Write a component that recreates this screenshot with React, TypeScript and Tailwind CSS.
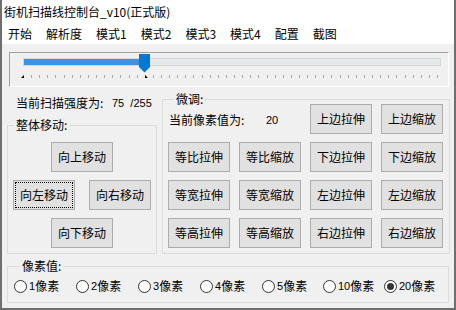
import type { ReactNode } from 'react';

const menus = ['开始', '解析度', '模式1', '模式2', '模式3', '模式4', '配置', '截图'];

const fineRows = [
  ['等比拉伸', '等比缩放', '下边拉伸', '下边缩放'],
  ['等宽拉伸', '等宽缩放', '左边拉伸', '左边缩放'],
  ['等高拉伸', '等高缩放', '右边拉伸', '右边缩放'],
];

const radios = [
  { n: '1', w: 'w-[62px]' },
  { n: '2', w: 'w-[62px]' },
  { n: '3', w: 'w-[62px]' },
  { n: '4', w: 'w-[62px]' },
  { n: '5', w: 'w-[61px]' },
  { n: '10', w: 'w-[61px]' },
  { n: '20', w: 'w-[61px]', checked: true },
];

function Btn({ label, focus }: { label: string; focus?: boolean }) {
  return (
    <button className="relative w-[62px] h-[30px] bg-[#e1e1e1] border border-[#adadad] text-[12px] leading-none text-black flex items-center justify-center">
      {focus && <span className="absolute inset-[1px] border border-dotted border-black" />}
      {label}
    </button>
  );
}

function Group({ label, className, children }: { label: string; className: string; children: ReactNode }) {
  return (
    <fieldset className={`border border-[#dcdcdc] ${className}`}>
      <legend className="ml-[6px] px-[2px] text-[12px] leading-[12px]">{label}</legend>
      {children}
    </fieldset>
  );
}

function Radio({ n, w, checked }: { n: string; w: string; checked?: boolean }) {
  return (
    <div className={`flex items-center h-[14px] ${w}`}>
      <span className="w-[13px] h-[13px] rounded-full border border-[#333333] bg-white flex items-center justify-center shrink-0">
        {checked && <span className="w-[7px] h-[7px] rounded-full bg-[#333333]" />}
      </span>
      <span className="ml-[2px] font-['Liberation_Sans',sans-serif] text-[11px]">{n}</span>
      <span>像素</span>
    </div>
  );
}

function Slider() {
  const ticks = Array.from({ length: 52 }, (_, i) => 13 + (i * 414) / 51);
  return (
    <div className="relative mt-[8px] ml-[7px] w-[440px] h-[35px] border border-t-[#a0a0a0] border-l-[#a0a0a0] border-r-white border-b-white">
      {/* track */}
      <div className="mt-[5px] ml-[13px] w-[418px] h-[8px] bg-[#e7eaea] border border-[#d6d6d6] p-0">
        <div className="w-[116px] h-full bg-[#3a93e6]" />
      </div>
      {/* thumb */}
      <svg className="absolute left-[129px] top-[1px]" width="11" height="19" viewBox="0 0 11 19">
        <polygon points="0,0 11,0 11,13 5.5,18.5 0,13" fill="#0078d7" />
      </svg>
      {/* ticks */}
      <svg className="absolute left-0 top-[21px]" width="438" height="5" viewBox="0 0 438 5">
        {ticks.map((x, i) =>
          i === 0 ? null : <rect key={i} x={Math.round(x)} y={1} width={1} height={3} fill="#a8a8a8" />
        )}
        <polygon points="11,4 14,4 14,1" fill="#000" />
        <polygon points="135,1 135,4 138,4" fill="#000" />
      </svg>
    </div>
  );
}

export default function App() {
  return (
    <div className="w-[456px] h-[310px] flex flex-col bg-white border-x-2 border-b-2 border-[#6f6f6f] font-['Noto_Sans_CJK_SC',sans-serif] text-[12px] text-black overflow-hidden">
      {/* title */}
      <div className="h-[24px] shrink-0 flex items-center pl-[2px] leading-none">街机扫描线控制台_v10(正式版)</div>

      {/* menu */}
      <div className="h-[20px] shrink-0 flex items-center gap-[14px] pl-[6px] leading-none">
        {menus.map((m) => (
          <span key={m}>{m}</span>
        ))}
      </div>

      {/* client area */}
      <div className="flex-1 bg-[#f0f0f0] flex flex-col">
        <Slider />

        <div className="mt-[6px] ml-[5px] flex gap-[5px]">
          {/* left column */}
          <div className="w-[150px] flex flex-col">
            <div className="mt-[3px] pl-[9px] h-[14px] flex items-center leading-none">
              <span className="w-[96px]">当前扫描强度为:</span>
              <span className="font-['Liberation_Sans',sans-serif] text-[11px]">75 &nbsp;/255</span>
            </div>
            <Group label="整体移动:" className="mt-[9px] w-[150px] pt-[11px] pb-[5px] flex flex-col gap-[8px]">
              <div className="flex justify-center">
                <Btn label="向上移动" />
              </div>
              <div className="flex justify-between px-[5px]">
                <Btn label="向左移动" focus />
                <Btn label="向右移动" />
              </div>
              <div className="flex justify-center">
                <Btn label="向下移动" />
              </div>
            </Group>
          </div>

          {/* fine adjust */}
          <Group label="微调:" className="w-[288px] pl-[5px] pb-[5px]">
            <div className="-mt-[1px] grid grid-cols-[62px_62px_62px_62px] gap-x-[9px] gap-y-[8px]">
              <div className="col-span-2 flex items-center pl-[1px] pt-[2px] leading-none">
                <span className="w-[97px]">当前像素值为:</span>
                <span className="font-['Liberation_Sans',sans-serif] text-[11px]">20</span>
              </div>
              <Btn label="上边拉伸" />
              <Btn label="上边缩放" />
              {fineRows.flat().map((l) => (
                <Btn key={l} label={l} />
              ))}
            </div>
          </Group>
        </div>

        {/* pixel value */}
        <Group label="像素值:" className="mt-[6px] ml-[5px] w-[442px] pl-[6px] pt-[7px] pb-[9px]">
          <div className="flex">
            {radios.map((r) => (
              <Radio key={r.n} n={r.n} w={r.w} checked={r.checked} />
            ))}
          </div>
        </Group>
      </div>
    </div>
  );
}
